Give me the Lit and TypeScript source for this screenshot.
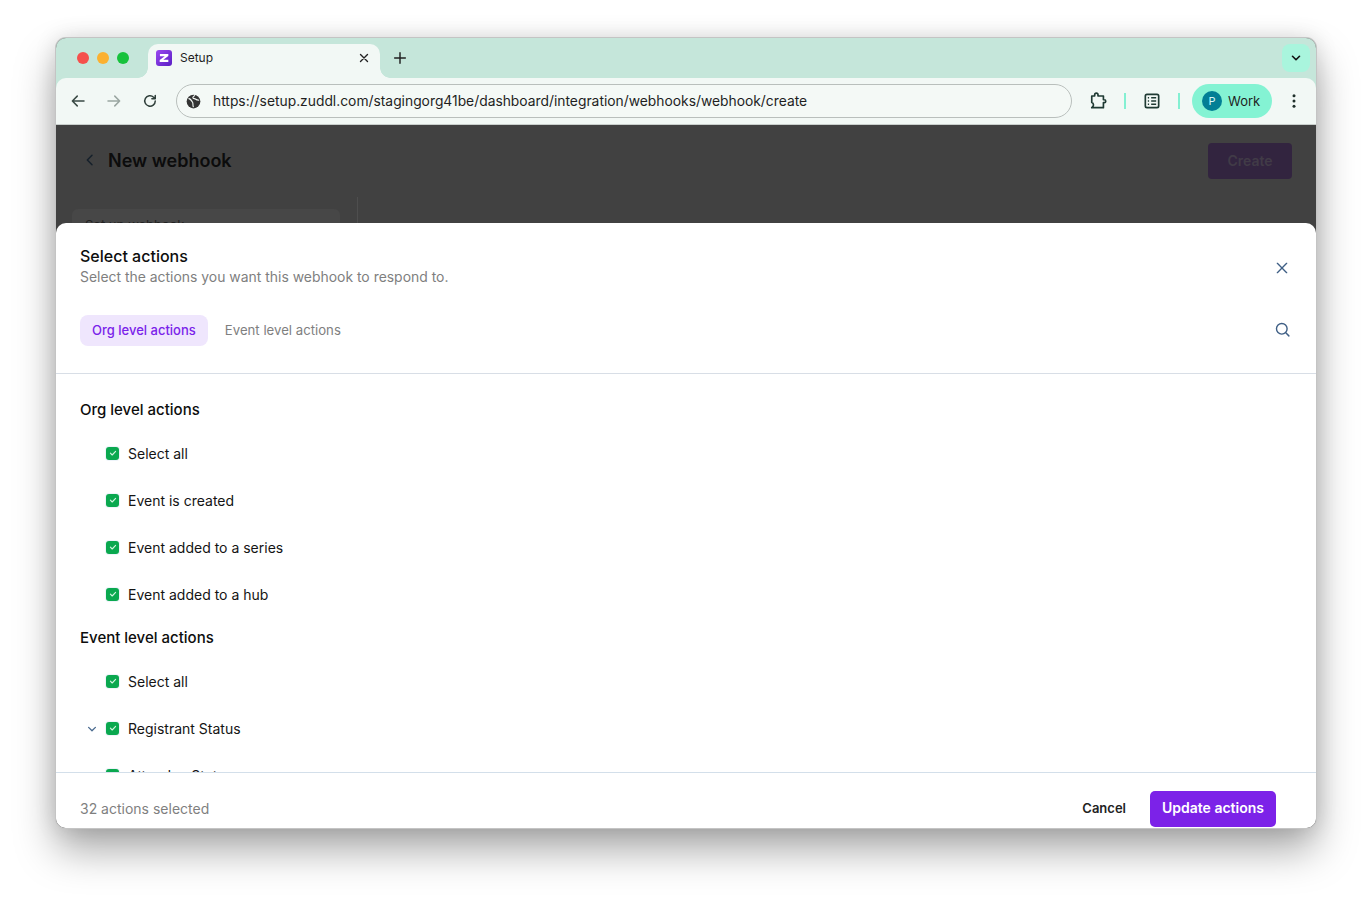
import { LitElement, html, css, svg } from "lit";
import { customElement } from "lit/decorators.js";

const check = html`<span class="cb"><svg viewBox="0 0 12 12" width="12" height="12"><path d="M3.4 6.2 5.2 8l3.4-3.6" fill="none" stroke="#d5f5e2" stroke-width="1.1" stroke-linecap="round" stroke-linejoin="round"/></svg></span>`;

const row = (label: string, chevron = false) => html`
  <div class="row">
    <span class="chev">${chevron ? html`<svg viewBox="0 0 10 10" width="10" height="10"><path d="M1.6 3.4 5 6.8l3.4-3.4" fill="none" stroke="#4a6a8f" stroke-width="1.3" stroke-linecap="round" stroke-linejoin="round"/></svg>` : ""}</span>
    ${check}
    <span class="lbl">${label}</span>
  </div>`;

const icon = (size: number, content: unknown, cls = "") =>
  html`<svg class=${cls} viewBox="0 0 24 24" width=${size} height=${size} fill="none">${content}</svg>`;

@customElement("app-root")
export class AppRoot extends LitElement {
  static styles = css`
    :host { display: block; width: 1372px; height: 902px; box-sizing: border-box; padding: 38px 56px 74px; background: #fff; font-family: Inter, "Liberation Sans", sans-serif; color: #111; }
    .win { position: relative; height: 790px; border-radius: 10px; overflow: hidden; background: #414141; display: flex; flex-direction: column; }
    .shadow { height: 790px; border-radius: 10px; box-shadow: 0 0 0 1px #c4c4c4, 0 22px 40px rgba(0,0,0,.34), 0 0 22px rgba(0,0,0,.13); }
    .strip { height: 40px; background: #c5e6da; display: flex; align-items: flex-end; flex: none; }
    .lights { display: flex; gap: 8px; padding: 0 19px 14px 21px; }
    .lights i { width: 12px; height: 12px; border-radius: 50%; display: block; }
    .tab { position: relative; width: 232px; height: 34px; background: #f2f8f5; border-radius: 10px 10px 0 0; display: flex; align-items: center; padding: 0 9px 6px 8px; box-sizing: border-box; font-size: 12px; color: #1f1f1f; }
    .tab .fav { width: 16px; height: 16px; border-radius: 3px; background: linear-gradient(135deg,#9a48f0,#5a1fc4); display: flex; align-items: center; justify-content: center; margin-right: 8px; color: #fff; }
    .tab span { flex: 1; padding-bottom: 1px; }
    .tab::before, .tab::after { content: ""; position: absolute; bottom: 0; width: 10px; height: 10px; background: radial-gradient(circle at 0 0, transparent 9.5px, #f2f8f5 10px); }
    .tab::before { left: -10px; }
    .tab::after { right: -10px; background: radial-gradient(circle at 100% 0, transparent 9.5px, #f2f8f5 10px); }
    .plus { margin: 0 0 12px 12px; display: flex; }
    .spacer { flex: 1; }
    .more { width: 28px; height: 28px; border-radius: 8px; background: #a9f5dd; margin: 0 6px 6px 0; display: flex; align-items: center; justify-content: center; }
    .bar { height: 47px; background: #f2f8f5; border-radius: 10px 10px 0 0; display: flex; align-items: center; flex: none; box-sizing: border-box; border-bottom: 1px solid #c9cfcc; padding-left: 4px; }
    .barwrap { background: #c5e6da; flex: none; }
    .nav { width: 36px; display: flex; justify-content: center; }
    .url { width: 896px; height: 34px; margin-left: 8px; box-sizing: border-box; border: 1px solid #b9bfbc; border-radius: 17px; display: flex; align-items: center; padding-left: 9px; gap: 12px; font-size: 13.84px; color: #1f1f1f; background: #f4f9f6; }
    .tools { display: flex; align-items: center; margin-left: 16px; }
    .sep { width: 2px; height: 16px; background: #84f0d2; }
    .sep.a { margin: 0 16px 0 16px; }
    .sep.b { margin: 0 0 0 16px; }
    .work { width: 80px; height: 34px; border-radius: 17px; background: #84f3d3; display: flex; align-items: center; box-sizing: border-box; padding-left: 10px; gap: 6px; font-size: 13px; color: #1f1f1f; margin: 0 13px 0 12px; }
    .avatar { width: 20px; height: 20px; border-radius: 50%; background: #027f95; color: #d8f5f5; font-size: 11px; display: flex; align-items: center; justify-content: center; }
    .page { flex: 1; position: relative; background: #414141; overflow: hidden; }
    .pagehead { display: flex; align-items: center; justify-content: space-between; padding: 18px 24px 0 26px; }
    .title { display: flex; align-items: center; gap: 10px; font-size: 18px; font-weight: 600; color: #0c0c0c; padding-bottom: 2px; }
    .create { width: 84px; height: 36px; box-sizing: border-box; padding-bottom: 1px; border-radius: 4px; background: #32243f; color: #413b47; font-size: 14px; font-weight: 600; display: flex; align-items: center; justify-content: center; }
    .ghost { display: flex; align-items: flex-start; margin: 30px 0 0 16px; }
    .ghostbox { width: 268px; height: 40px; border-radius: 6px; background: #474747; padding: 8px 13px; box-sizing: border-box; font-size: 13px; color: #222; }
    .ghostline { width: 1px; height: 40px; background: #4e4e4e; margin: -12px 0 0 17px; }
    .modal { position: absolute; left: 0; right: 0; top: 98px; bottom: 0; background: #fff; border-radius: 10px 10px 0 0; display: flex; flex-direction: column; }
    .mhead { display: flex; justify-content: space-between; padding: 24px 26px 0 24px; height: 42px; flex: none; }
    h2 { margin: 0; font-size: 16px; line-height: 19px; font-weight: 500; color: #0d0d0d; }
    .sub { font-size: 13.93px; line-height: 17px; margin-top: 3px; color: #7f7f7f; }
    .close { margin: 13px 0 0; display: flex; }
    .tabs { display: flex; align-items: center; gap: 5px; padding: 26px 25px 0 24px; height: 31px; flex: none; }
    .pill { height: 31px; display: flex; align-items: center; box-sizing: border-box; padding: 0 12px 2px; border-radius: 8px; font-size: 13.2px; color: #7f7f7f; }
    .pill.on { background: #efe6fd; color: #7a22ea; font-weight: 500; font-size: 13px; }
    .search { margin-left: auto; margin-top: -3px; display: flex; }
    .scroll { margin-top: 27px; flex: 1; min-height: 0; overflow: hidden; border-top: 1px solid #d8dee6; border-bottom: 1px solid #d3dfea; padding: 0 24px; }
    h3 { margin: 0; font-size: 15px; line-height: 18px; font-weight: 500; color: #0d0d0d; }
    h3.first { margin-top: 27px; margin-bottom: 11px; }
    h3.second { margin-top: 11px; margin-bottom: 11px; }
    .row { height: 47px; display: flex; align-items: center; font-size: 14px; color: #141414; }
    .chev { width: 26px; display: flex; justify-content: flex-start; padding-left: 7px; box-sizing: border-box; }
    .cb { width: 13px; height: 13px; border-radius: 3px; background: #0aa84f; box-shadow: 0 0 0 1px #eef4fa; display: flex; margin-right: 9px; margin-top: -1px; flex: none; align-items: center; justify-content: center; }
    .foot { height: 55px; flex: none; display: flex; align-items: center; box-sizing: border-box; padding: 16px 40px 0 24px; background: #fff; border-radius: 0 0 10px 10px; }
    .count { font-size: 14px; color: #7f7f7f; flex: 1; padding-bottom: 1px; }
    .cancel { font-size: 13px; font-weight: 600; color: #222; margin-right: 24px; padding-bottom: 2px; }
    .update { width: 126px; height: 36px; box-sizing: border-box; padding-bottom: 2px; border-radius: 5px; background: #7c22e8; color: #fff; font-size: 14px; font-weight: 600; display: flex; align-items: center; justify-content: center; }
  `;

  render() {
    return html`
      <div class="shadow"><div class="win">
        <div class="strip">
          <div class="lights"><i style="background:#f5504c"></i><i style="background:#fbb130"></i><i style="background:#17c23c"></i></div>
          <div class="tab">
            <div class="fav"><svg viewBox="0 0 12 12" width="14" height="14"><path d="M2.5 2.5h7.2v1.7L5.4 7.6h4.3v1.9H2.3V7.8L6.6 4.4H2.5z" fill="#fff"/></svg></div>
            <span>Setup</span>
            ${icon(14, svg`<path d="M6 6l12 12M18 6 6 18" stroke="#222" stroke-width="2.4" stroke-linecap="round"/>`)}
          </div>
          <div class="plus">${icon(16, svg`<path d="M12 4v16M4 12h16" stroke="#222" stroke-width="2.2" stroke-linecap="round"/>`)}</div>
          <div class="spacer"></div>
          <div class="more">${icon(14, svg`<path d="M6 9l6 6 6-6" stroke="#111" stroke-width="2.8" stroke-linecap="round" stroke-linejoin="round"/>`)}</div>
        </div>
        <div class="barwrap"><div class="bar">
          <div class="nav">${icon(18, svg`<path d="M20 12H5M11 5.5 4.5 12l6.5 6.5" stroke="#3a4a45" stroke-width="2" stroke-linecap="round" stroke-linejoin="round"/>`)}</div>
          <div class="nav">${icon(18, svg`<path d="M4 12h15M13 5.5l6.5 6.5-6.5 6.5" stroke="#9aa6a1" stroke-width="2" stroke-linecap="round" stroke-linejoin="round"/>`)}</div>
          <div class="nav">${icon(18, svg`<path d="M19 12a7 7 0 1 1-2.2-5.1L19 9M19 4.5V9h-4.5" stroke="#2f3f3a" stroke-width="2" stroke-linecap="round" stroke-linejoin="round"/>`)}</div>
          <div class="url">
            ${icon(15, svg`<circle cx="12" cy="12" r="11" fill="#333"/><path d="M4 7c3 1 4 2 5 4s2 2 2 4 0 4 1 6M14 2c-1 2-3 2-3 4s3 1 4 2 3 2 6 2" stroke="#f4f9f6" stroke-width="1.8" fill="none"/>`)}
            <span>https://setup.zuddl.com/stagingorg41be/dashboard/integration/webhooks/webhook/create</span>
          </div>
          <div class="tools">
            ${icon(20, svg`<path d="M8 4.5c0-1.5 1-2 2-2s2 .5 2 2V6h6.5v4.5h1c1.3 0 1.8 1 1.8 1.7s-.5 1.8-1.8 1.8h-1V20H4.5l1-1c1-1 1.2-2 1-3s-1-2-2-2.2V6H8z" stroke="#1f3a33" stroke-width="2" stroke-linejoin="round"/>`)}
            <div class="sep a"></div>
            ${icon(20, svg`<rect x="4" y="4" width="16" height="16" rx="2" stroke="#1f3a33" stroke-width="2"/><path d="M11 8h6M11 12h6M11 16h6M7 8h1.5M7 12h1.5M7 16h1.5" stroke="#1f3a33" stroke-width="1.8"/>`)}
            <div class="sep b"></div>
            <div class="work"><div class="avatar">P</div>Work</div>
            ${icon(18, svg`<circle cx="12" cy="5" r="2" fill="#1f2f2a"/><circle cx="12" cy="12" r="2" fill="#1f2f2a"/><circle cx="12" cy="19" r="2" fill="#1f2f2a"/>`)}
          </div>
        </div></div>
        <div class="page">
          <div class="pagehead">
            <div class="title">${icon(16, svg`<path d="M15 5l-7 7 7 7" stroke="#15202b" stroke-width="2.2" stroke-linecap="round" stroke-linejoin="round"/>`)}New webhook</div>
            <div class="create">Create</div>
          </div>
          <div class="ghost"><div class="ghostbox">Set up webhook</div><div class="ghostline"></div></div>
          <div class="modal">
            <div class="mhead">
              <div><h2>Select actions</h2><div class="sub">Select the actions you want this webhook to respond to.</div></div>
              <div class="close">${icon(16, svg`<path d="M5 5l14 14M19 5 5 19" stroke="#3f5f85" stroke-width="2" stroke-linecap="round"/>`)}</div>
            </div>
            <div class="tabs">
              <div class="pill on">Org level actions</div>
              <div class="pill">Event level actions</div>
              <div class="search">${icon(17, svg`<circle cx="11" cy="11" r="7.5" stroke="#3f5f85" stroke-width="2"/><path d="M17 17l4 4" stroke="#3f5f85" stroke-width="2" stroke-linecap="round"/>`)}</div>
            </div>
            <div class="scroll">
              <h3 class="first">Org level actions</h3>
              ${row("Select all")}
              ${row("Event is created")}
              ${row("Event added to a series")}
              ${row("Event added to a hub")}
              <h3 class="second">Event level actions</h3>
              ${row("Select all")}
              ${row("Registrant Status", true)}
              ${row("Attendee Status")}
            </div>
            <div class="foot">
              <div class="count">32 actions selected</div>
              <div class="cancel">Cancel</div>
              <div class="update">Update actions</div>
            </div>
          </div>
        </div>
      </div></div>
    `;
  }
}
